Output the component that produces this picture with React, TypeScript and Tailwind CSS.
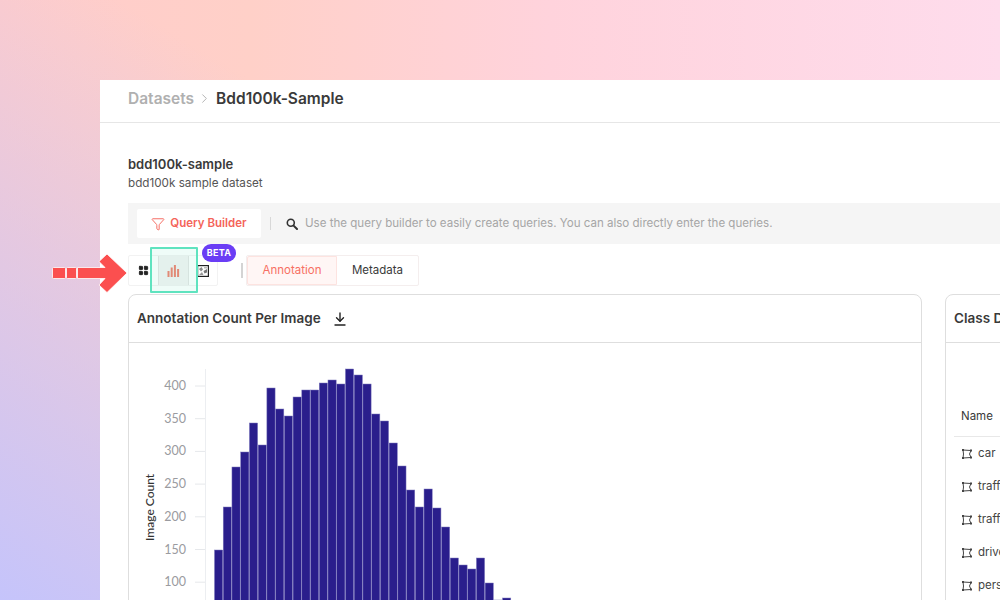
import { Filter, LayoutGrid, ChevronRight } from "lucide-react";

const font = { fontFamily: "Inter, sans-serif" };

// bar tops, in page pixels
const barTops = [
	550, 507, 467, 452, 423, 445, 388, 409, 416, 397, 390, 390, 383, 380, 384,
	369, 375, 384, 414, 421, 443, 466, 490, 507, 489, 508, 527, 558, 565, 569,
	558, 583, 600, 598,
];

const ticks = [400, 350, 300, 250, 200, 150, 100];

const classRows = ["car", "traffic sign", "traffic light", "driver", "person"];

const ClassIcon = () => (
	<svg width="12" height="12" viewBox="0 0 12 12" fill="none" stroke="#444" strokeWidth="1" className="shrink-0">
		<path d="M2 2 L10 2.5 L8.5 6 L10 9.5 L2 10 L2.5 6 Z" />
		<rect x="1" y="1" width="2" height="2" fill="#444" stroke="none" />
		<rect x="9" y="1.5" width="2" height="2" fill="#444" stroke="none" />
		<rect x="1" y="9" width="2" height="2" fill="#444" stroke="none" />
		<rect x="9" y="8.5" width="2" height="2" fill="#444" stroke="none" />
	</svg>
);

const BarIcon = () => (
	<svg width="13" height="12" viewBox="0 0 13 12" fill="#f0806f">
		<rect x="0.5" y="6" width="2" height="6" />
		<rect x="3.7" y="2.5" width="2" height="9.5" />
		<rect x="6.9" y="0" width="2" height="12" />
		<rect x="10.1" y="4" width="2" height="8" />
	</svg>
);

const ImageBoxIcon = () => (
	<svg width="12" height="12" viewBox="0 0 12 12" fill="none">
		<rect x="0.6" y="0.6" width="10.8" height="10.8" stroke="#222" strokeWidth="1.2" />
		<path d="M2 4 L4.5 2 L6 4.5 L4 6.5 Z" fill="#888" />
		<path d="M6.5 6 L10 4 L10 7.5 L7.5 8.5 Z" fill="#777" />
		<path d="M2 10 L5 7 L6.5 10 Z" fill="#999" />
		<rect x="7" y="2" width="3" height="1.5" fill="#bbb" />
	</svg>
);

const DownloadIcon = () => (
	<svg width="12" height="14" viewBox="0 0 12 14" fill="none" stroke="#222" strokeWidth="1.4" strokeLinecap="round" strokeLinejoin="round">
		<path d="M6 1 V9" />
		<path d="M2.5 5.8 L6 9.3 L9.5 5.8" />
		<path d="M1 13 H11" />
	</svg>
);

const SearchIcon = () => (
	<svg width="12" height="12" viewBox="0 0 12 12" fill="none" stroke="#333" strokeWidth="1.6" strokeLinecap="round">
		<circle cx="4.8" cy="4.8" r="3.5" />
		<path d="M7.6 7.6 L11 11" strokeWidth="2" />
	</svg>
);

const Histogram = () => (
	<svg width="560" height="258" viewBox="130 343 560 258" className="block">
		<line x1="206.5" y1="369" x2="206.5" y2="601" stroke="#eceef1" />
		{ticks.map((t, i) => {
			const y = 386 + i * 32.7;
			return (
				<g key={t}>
					<line x1="196" y1={y} x2="206" y2={y} stroke="#e6e8eb" />
					<text x="187" y={y + 4} textAnchor="end" fontSize="12.5" fill="#9a9ba0" style={{ fontFamily: "Lato, sans-serif" }}>
						{t}
					</text>
				</g>
			);
		})}
		<text
			transform="translate(155 541) rotate(-90)"
			fontSize="12"
			fontWeight="500"
			fill="#333"
			style={{ fontFamily: "Lato, sans-serif" }}
		>
			Image Count
		</text>
		{barTops.map((top, i) => (
			<rect
				key={i}
				x={215.5 + i * 8.73}
				y={top}
				width="8.2"
				height={601 - top}
				fill="#2a1e8c"
				stroke="#7d78bd"
				strokeWidth="0.5"
			/>
		))}
	</svg>
);

export default function App() {
	return (
		<div
			className="relative h-[600px] w-[1000px] overflow-hidden bg-[linear-gradient(to_top_right,#c5c4fb_0%,#c5c4fb00_56%),linear-gradient(90deg,#ffcccb_0%,#ffd0c8_25%,#ffd3dc_55%,#fedcec_100%)] pl-[100px] pt-[80px]"
			style={font}
		>
			<div className="h-[520px] w-[900px] overflow-hidden bg-white">
				{/* Breadcrumb */}
				<div className="flex h-[43px] items-center gap-[3px] border-b border-[#e6e6e6] pb-[5px] pl-[28px] text-[15.5px] font-semibold">
					<span className="text-[#b0b0b0]">Datasets</span>
					<ChevronRight className="h-[15px] w-[15px] text-[#b0b0b0]" strokeWidth={1.5} />
					<span className="ml-[1px] text-[#3a3a3a]">Bdd100k-Sample</span>
				</div>

				<div className="pl-[28px]">
					<div className="pt-[33px] text-[13px] font-semibold leading-[16px] text-[#3a3a3a]">bdd100k-sample</div>
					<div className="mt-[4px] text-[11.7px] leading-[14px] text-[#555]">bdd100k sample dataset</div>

					{/* Query bar */}
					<div className="mt-[13px] flex h-[41px] w-[872px] items-center bg-[#f5f5f5] pl-[9px]">
						<div className="flex h-[29px] w-[124px] items-center justify-center gap-[5px] rounded-[2px] bg-white text-[11.5px] font-semibold text-[#f4645a]">
							<Filter className="h-[14px] w-[14px]" strokeWidth={1.6} />
							Query Builder
						</div>
						<div className="ml-[9px] h-[13px] w-px bg-[#d8d8d8]" />
						<div className="ml-[15px] flex">
							<SearchIcon />
						</div>
						<span className="ml-[7px] whitespace-nowrap text-[11.55px] text-[#a6a6a6]">
							Use the query builder to easily create queries. You can also directly enter the queries.
						</span>
					</div>

					{/* Toolbar */}
					<div className="mt-[11px] flex h-[31px] items-center">
						<div className="flex h-[31px] w-[90px] items-center rounded-[2px] border border-[#f2f2f2]">
							<div className="flex w-[29px] justify-center">
								<LayoutGrid className="h-[11px] w-[11px] fill-[#222] text-[#222]" strokeWidth={2} />
							</div>
							<div className="flex h-[29px] w-[31px] items-center justify-center border-x border-[#e4e4e4] bg-[#f3f3f3]">
								<BarIcon />
							</div>
							<div className="flex w-[28px] justify-center">
								<ImageBoxIcon />
							</div>
						</div>
						<div className="ml-[23px] h-[15px] w-[2px] bg-[#d4d4d4]" />
						<div className="ml-[3px] flex h-[31px] rounded-[2px] border border-[#f4eeee] text-[11.5px]">
							<div className="flex w-[90px] items-center justify-center rounded-l-[2px] border border-[#fde3e0] bg-[#fff6f5] pt-[1px] text-[#f76f63]">
								Annotation
							</div>
							<div className="flex w-[81px] items-center justify-center pt-[1px] text-[#3a3a3a]">Metadata</div>
						</div>
					</div>

					{/* Panels */}
					<div className="mt-[8px] flex gap-[23px]">
						<div className="h-[320px] w-[794px] shrink-0 overflow-hidden rounded-t-[8px] border border-[#dedede]">
							<div className="flex h-[48px] items-center gap-[13px] border-b border-[#dedede] pl-[8px] text-[13.5px] font-semibold text-[#3a3a3a]">
								Annotation Count Per Image
								<DownloadIcon />
							</div>
							<Histogram />
						</div>

						<div className="h-[320px] w-[200px] shrink-0 overflow-hidden rounded-t-[8px] border border-[#dedede]">
							<div className="flex h-[48px] items-center border-b border-[#dedede] pl-[8px] text-[13.5px] font-semibold whitespace-nowrap text-[#3a3a3a]">
								Class Distribution
							</div>
							<div className="ml-[8px] mt-[66px] border-b border-[#e8e8e8] pb-[13px] pl-[7px] text-[11.5px] leading-[14px] text-[#3a3a3a]">
								Name
							</div>
							<div className="ml-[15px] mt-[9px] flex flex-col gap-[17px]">
								{classRows.map((name) => (
									<div key={name} className="flex h-[16px] items-center gap-[5px] whitespace-nowrap text-[11.5px] text-[#444]">
										<ClassIcon />
										{name}
									</div>
								))}
							</div>
						</div>
					</div>
				</div>
			</div>

			{/* Highlight over the chart view button */}
			<div className="absolute left-[150px] top-[247px] h-[46px] w-[48px] rounded-[1px] border-2 border-[#5fe3bf] bg-[#5fe3bf]/10" />

			{/* Beta badge */}
			<div className="absolute left-[202px] top-[244px] flex h-[18px] w-[34px] items-center justify-center rounded-full bg-[#6a3df5] text-[9px] font-bold tracking-[0.3px] text-white">
				BETA
			</div>

			{/* Pointer arrow */}
			<svg width="84" height="44" viewBox="0 0 84 44" className="absolute left-[48px] top-[251px]">
				<g fill="#fb4f4f" stroke="#fff" strokeOpacity="0.8" strokeWidth="1" strokeLinejoin="round">
					<rect x="4.5" y="16.5" width="13" height="11" rx="1" />
					<rect x="18.5" y="16.5" width="10" height="11" rx="1" />
					<path d="M29.5 16.5 H57 L51 10.5 L59 3 L79 22 L59 41.5 L51 34 L57 27.5 H29.5 Z" />
				</g>
			</svg>
		</div>
	);
}
